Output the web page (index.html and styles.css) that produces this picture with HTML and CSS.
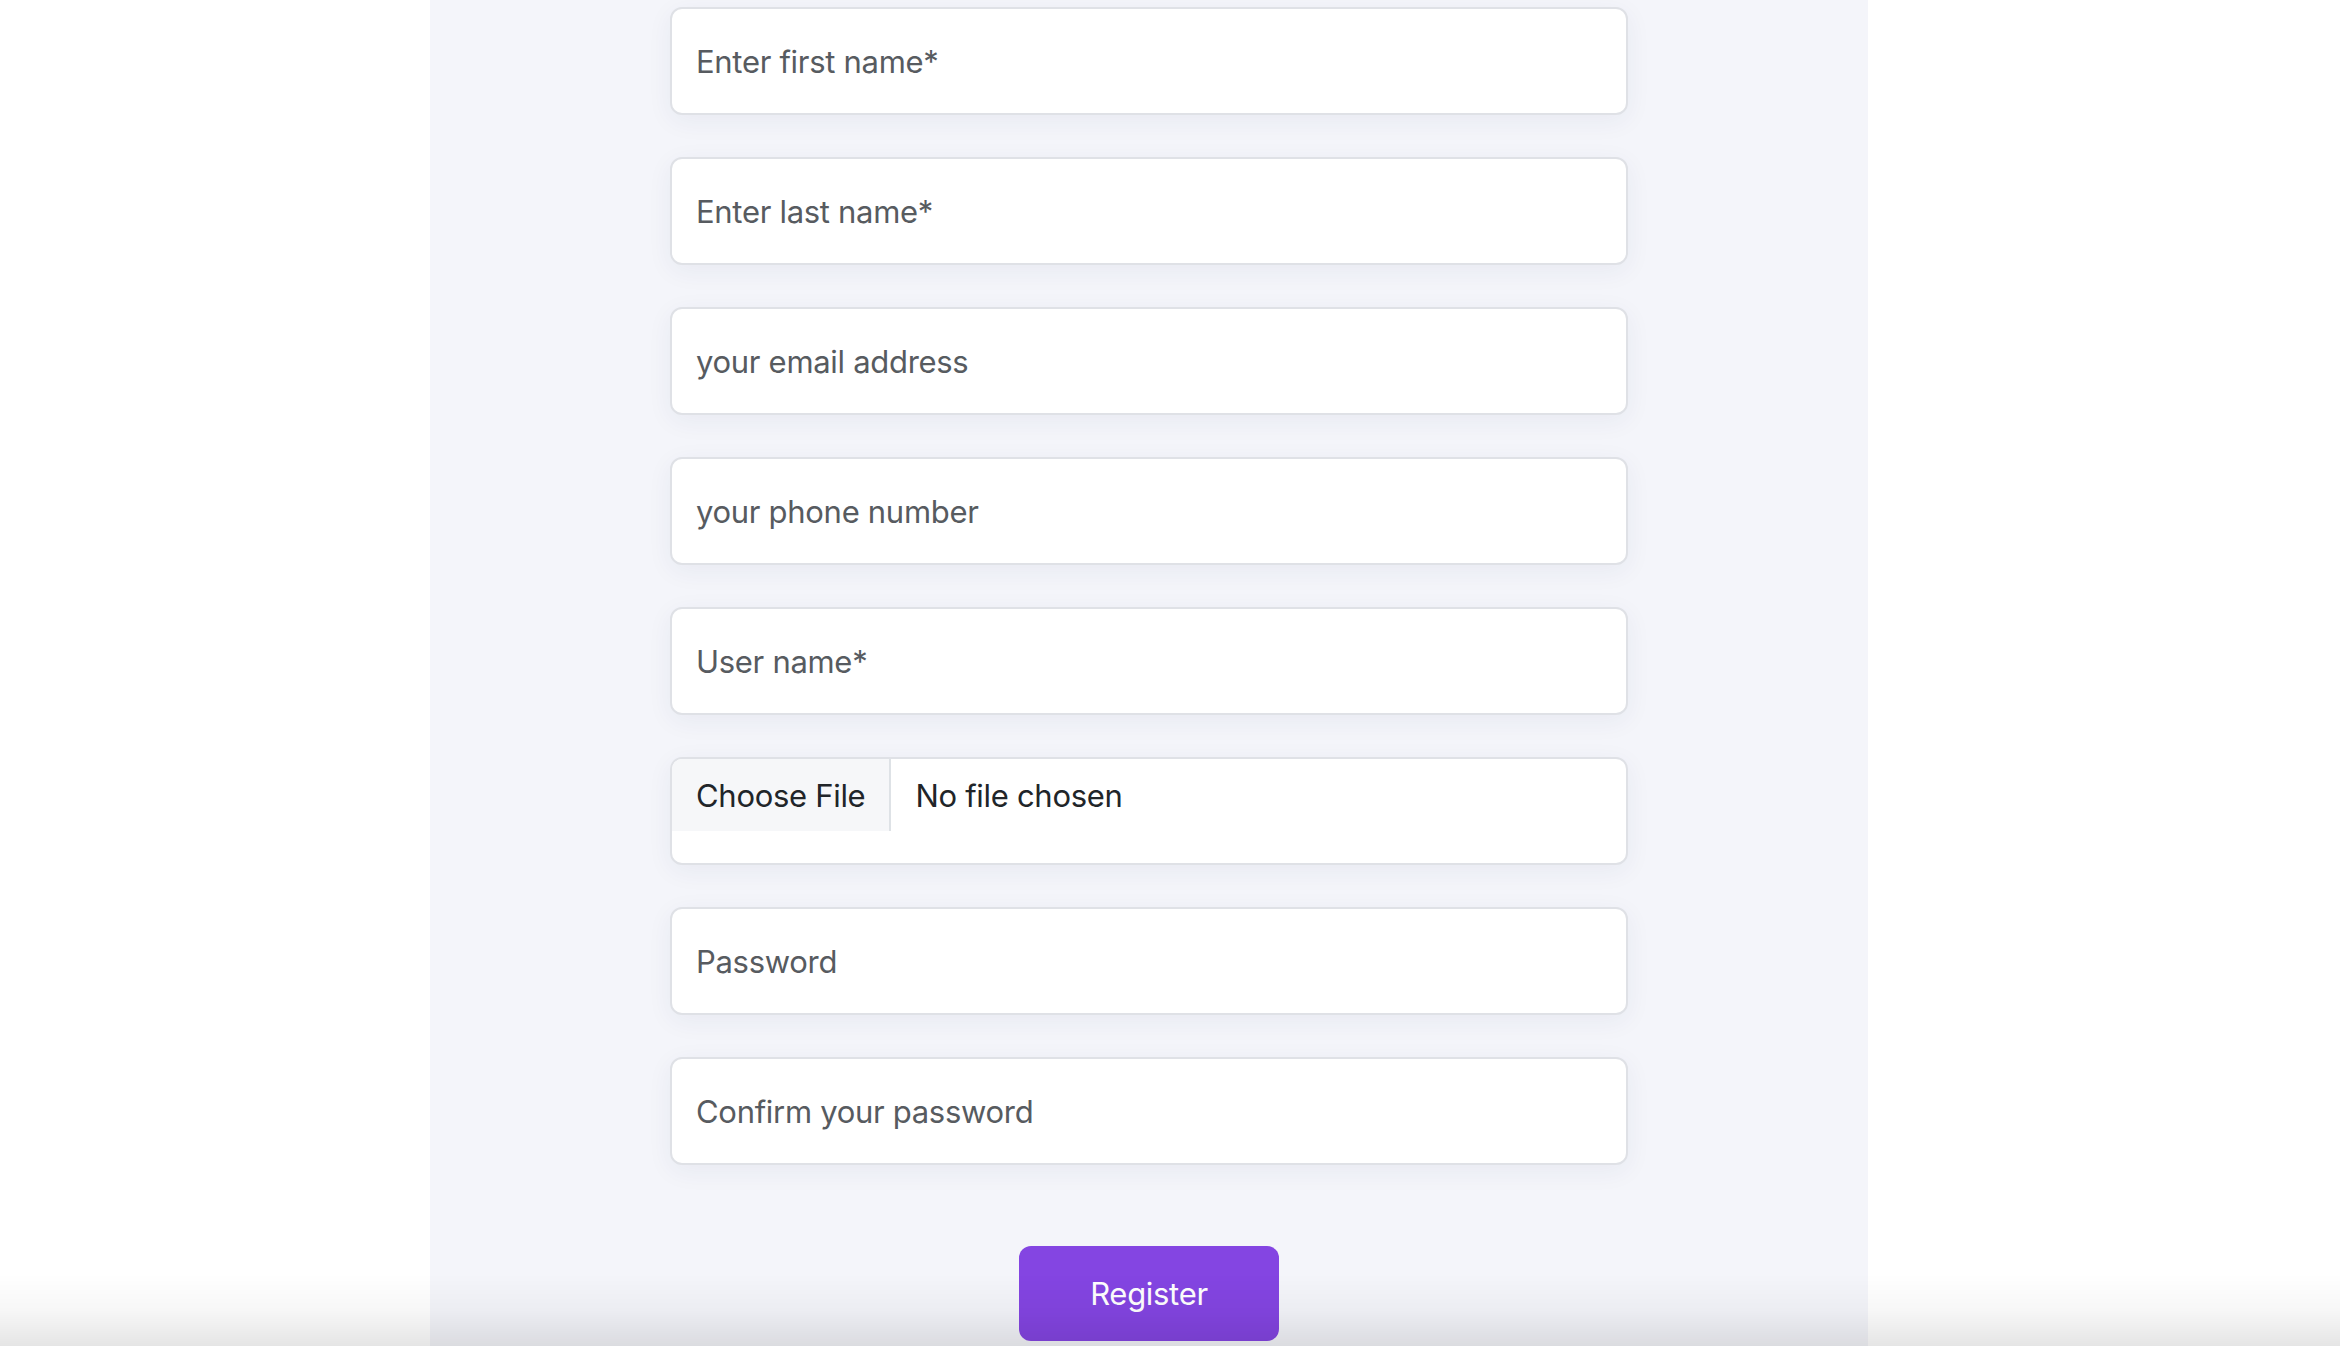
FILE: index.html
```html
<!DOCTYPE html>
<html lang="en">
<head>
<meta charset="utf-8">
<title>Register</title>
<link rel="stylesheet" href="styles.css">
</head>
<body>
<main class="panel">
  <form class="form">
    <input class="field" type="text" placeholder="Enter first name*">
    <input class="field" type="text" placeholder="Enter last name*">
    <input class="field" type="email" placeholder="your email address">
    <input class="field" type="tel" placeholder="your phone number">
    <input class="field" type="text" placeholder="User name*">
    <label class="field file-field">
      <span class="file-btn">Choose File</span>
      <span class="file-name">No file chosen</span>
    </label>
    <input class="field" type="password" placeholder="Password">
    <input class="field" type="password" placeholder="Confirm your password">
    <div class="actions">
      <button class="register" type="button">Register</button>
    </div>
  </form>
</main>
<div class="bottom-fade"></div>
</body>
</html>
```

FILE: styles.css
```css
html, body {
  margin: 0;
  padding: 0;
  background: #ffffff;
  height: 100%;
  overflow: hidden;
}

body {
  font-family: Inter, "Noto Sans", "Liberation Sans", sans-serif;
}

.panel {
  margin-left: 430px;
  width: 1438px;
  min-height: 100vh;
  background: #f4f5fa;
  display: flex;
  justify-content: center;
}

.form {
  width: 958px;
  padding-top: 7px;
  display: flex;
  flex-direction: column;
  gap: 42px;
}

.field {
  box-sizing: border-box;
  display: block;
  width: 100%;
  height: 108px;
  margin: 0;
  padding: 0 24px;
  border: 2px solid #dfe1e6;
  border-radius: 12px;
  background: #ffffff;
  box-shadow: 0 6px 26px rgba(40, 50, 100, 0.06);
  font-family: Inter, "Noto Sans", "Liberation Sans", sans-serif;
  font-size: 31px;
  letter-spacing: -0.3px;
  color: #212529;
  outline: none;
}

.field::placeholder {
  color: #575b60;
  opacity: 1;
}

.file-field {
  padding: 0;
  display: flex;
  align-items: flex-start;
  overflow: hidden;
  cursor: pointer;
}

.file-btn {
  box-sizing: border-box;
  height: 72px;
  padding: 0 24px;
  display: flex;
  align-items: center;
  background: #f6f7f9;
  border-right: 2px solid #dee2e6;
  color: #212529;
}

.file-name {
  height: 72px;
  padding-left: 24px;
  display: flex;
  align-items: center;
  color: #212529;
}

.actions {
  display: flex;
  justify-content: center;
  padding-top: 39px;
}

.register {
  width: 260px;
  height: 95px;
  border: none;
  border-radius: 12px;
  background: #8445e2;
  color: #ffffff;
  font-family: Inter, "Noto Sans", "Liberation Sans", sans-serif;
  font-size: 31px;
  letter-spacing: -0.3px;
  cursor: pointer;
}

.bottom-fade {
  position: fixed;
  left: 0;
  right: 0;
  bottom: 0;
  height: 72px;
  background: linear-gradient(to bottom, rgba(0, 0, 0, 0) 0%, rgba(0, 0, 0, 0.03) 50%, rgba(0, 0, 0, 0.1) 100%);
  pointer-events: none;
}
```
